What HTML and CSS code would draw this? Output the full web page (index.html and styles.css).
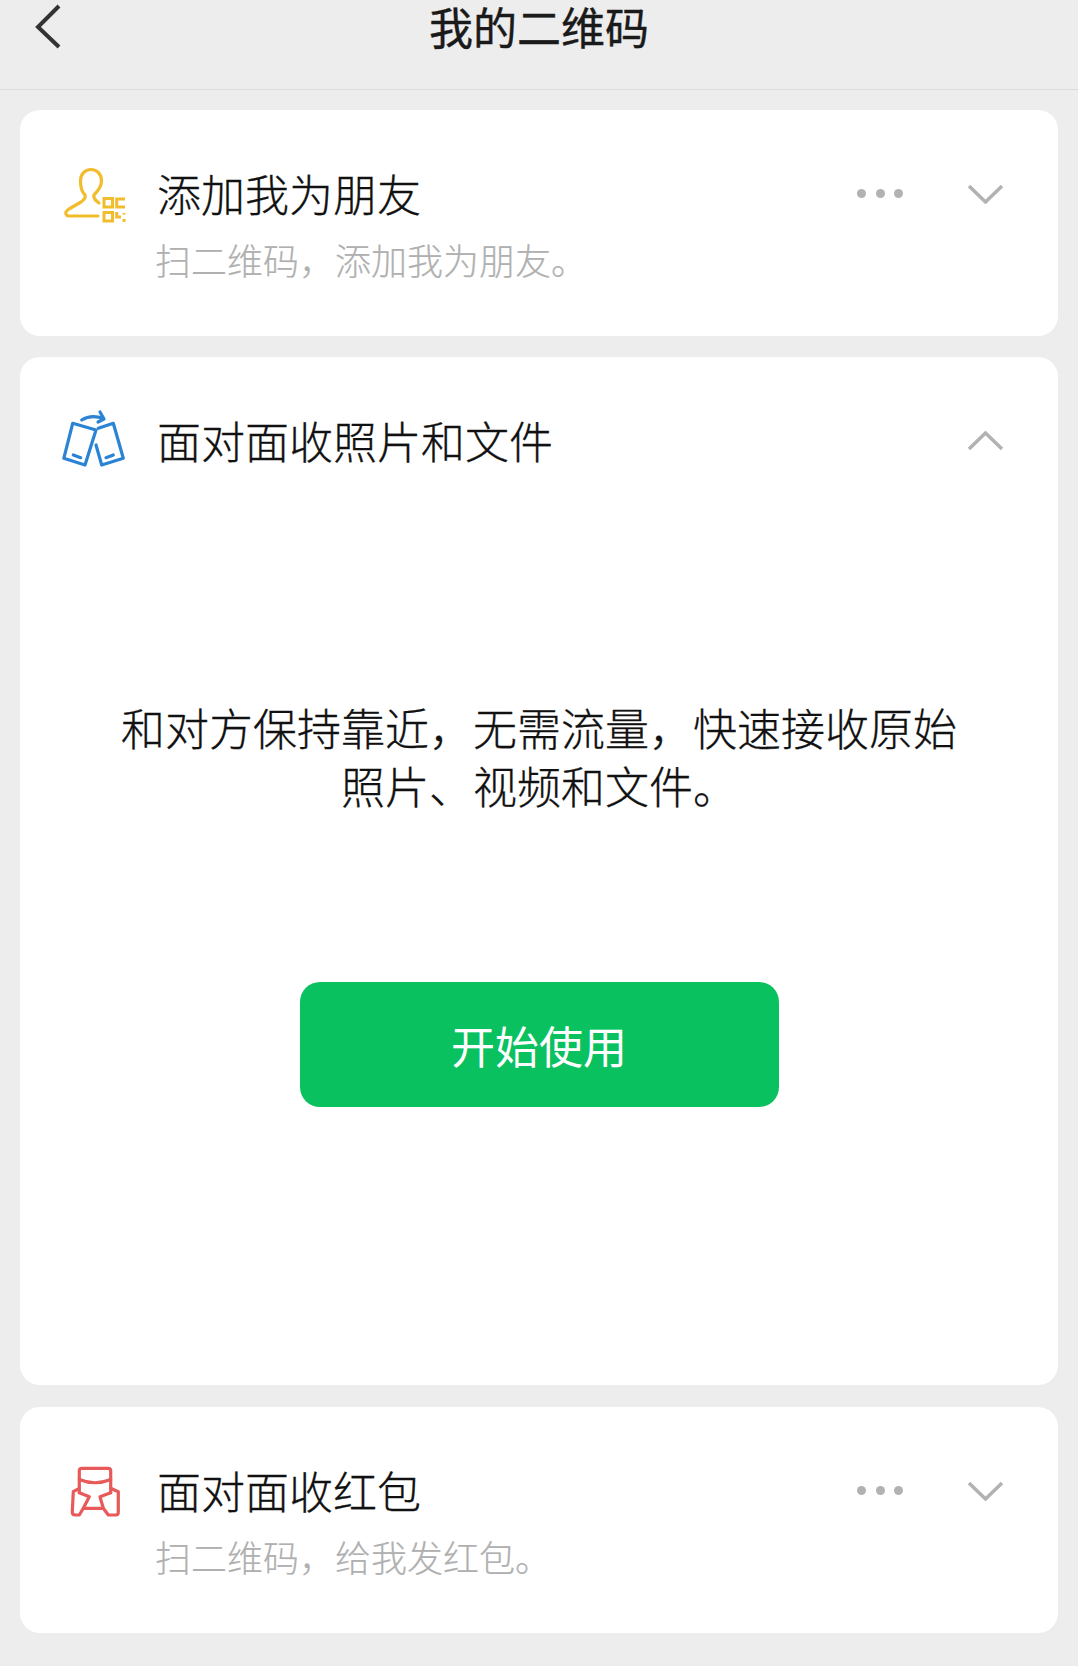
FILE: index.html
```html
<!DOCTYPE html>
<html lang="zh-CN">

<head>
    <meta charset="UTF-8">
    <title>我的二维码</title>
    <link rel="stylesheet" href="styles.css">
</head>

<body>

    <header class="top-bar">
        <svg class="back-icon" width="30" height="46" viewBox="0 0 30 46">
            <path d="M24 3 L3 24 L24 44" />
        </svg>
        <h1>我的二维码</h1>
    </header>

    <section class="card">
        <div class="row">
            <svg class="row-icon" width="64" height="58" viewBox="0 0 64 58">
                <g class="icon-yellow">
                    <path d="M36 36 C32 33 30 31 31 28 C35 24 38.5 19 38.5 14 C38.5 7 34 2.5 28 2.5 C22 2.5 17.5 7 17.5 14 C17.5 20 19 25 22 28 C23 31 21 33 18 35 L6 42 C3 44 2.5 46 3 47 C3.5 48.5 5 49 6 49 L35 49" />
                    <g class="qr">
                        <rect x="41" y="31.5" width="8.5" height="8.5" />
                        <rect x="41" y="45.5" width="8.5" height="8.5" />
                        <path d="M62 32 H53.7 V40 H62 M53.7 45 V50 H58 M61 46 V47.5 M61 52 V55" />
                    </g>
                </g>
            </svg>
            <div class="row-text">
                <div class="row-title">添加我为朋友</div>
                <div class="row-sub">扫二维码，添加我为朋友。</div>
            </div>
            <div class="dots"><span></span><span></span><span></span></div>
            <svg class="chevron" width="36" height="20" viewBox="0 0 36 20">
                <path d="M1 2 L17.5 18 L34 2" />
            </svg>
        </div>
    </section>

    <section class="card card-open">
        <div class="row">
            <svg class="row-icon" width="64" height="58" viewBox="0 0 64 58">
                <g class="icon-blue">
                    <path d="M9.7 9.3 L33 16 L22 51 L0.8 44.3 Z" />
                    <path d="M10.3 41 L17.7 43.7" />
                    <path d="M35.3 14.3 L50.3 9.3 L60.3 44.3 L38.7 51 L33 31" />
                    <path d="M43 43.7 L50.3 41" />
                    <path d="M18.7 6 C25 2 33 2 40.3 4.3 M37 -2 L41 5 L35 8" />
                </g>
            </svg>
            <div class="row-text">
                <div class="row-title">面对面收照片和文件</div>
            </div>
            <svg class="chevron" width="36" height="20" viewBox="0 0 36 20">
                <path d="M1 18 L17.5 2 L34 18" />
            </svg>
        </div>
        <p class="intro">和对方保持靠近，无需流量，快速接收原始<br>照片、视频和文件。</p>
        <button class="start-btn">开始使用</button>
    </section>

    <section class="card card-last">
        <div class="row">
            <svg class="row-icon" width="64" height="58" viewBox="0 0 64 58">
                <g class="icon-red">
                    <path d="M16.3 28.7 V6.5 C16.3 5 17.3 4.3 19 4.3 H45 C46.7 4.3 47.7 5 47.7 6.5 V28.7" />
                    <path d="M16.3 15.5 C26 19.5 38 19.5 47.7 15.5" />
                    <path d="M16.3 24.3 L10.3 27.7 L9.3 47.7 C9.3 50 10.3 51 12 51 H16.3 L20.3 44.3 H40.3 L45.3 51 H53 C54.7 51 55.3 50 55.3 47.7 V27.7 L47.7 24.3" />
                    <path d="M16.3 28.7 L26.3 32.7 L20.3 44.3" />
                    <path d="M47.7 28.7 L37 32.7 L40.3 44.3" />
                </g>
            </svg>
            <div class="row-text">
                <div class="row-title">面对面收红包</div>
                <div class="row-sub">扫二维码，给我发红包。</div>
            </div>
            <div class="dots"><span></span><span></span><span></span></div>
            <svg class="chevron" width="36" height="20" viewBox="0 0 36 20">
                <path d="M1 2 L17.5 18 L34 2" />
            </svg>
        </div>
    </section>

</body>

</html>
```

FILE: styles.css
```css
body {
    font-family: "Noto Sans CJK SC", "Noto Sans", sans-serif;
    margin: 0;
    padding: 0;
    height: 1666px;
    overflow: hidden;
    background-color: #ededed;
    color: #1a1a1a;
}

.top-bar {
    display: flex;
    justify-content: center;
    height: 89px;
    border-bottom: 1px solid #dcdcdc;
    position: relative;
}

.top-bar h1 {
    margin: 0;
    font-family: "Liberation Sans", "Noto Sans CJK SC", sans-serif;
    font-size: 44px;
    font-weight: 400;
    line-height: 60px;
    -webkit-text-stroke: 0.4px #1a1a1a;
}

.back-icon {
    position: absolute;
    left: 35px;
    top: 3px;
}

.back-icon path {
    fill: none;
    stroke: #333;
    stroke-width: 4;
}

.card {
    background-color: #fff;
    border-radius: 20px;
    margin: 20px 20px 0;
    height: 226px;
}

.card-open {
    height: 1028px;
    margin-top: 21px;
    display: flex;
    flex-direction: column;
    align-items: center;
}

.card-last {
    margin-top: 22px;
}

.row {
    display: flex;
    align-self: stretch;
    align-items: flex-start;
    padding: 50px 54px 0 43px;
}

.row-icon {
    flex: none;
    margin-right: 30px;
    margin-top: 7px;
    overflow: visible;
}

.row-icon g {
    fill: none;
    stroke-width: 3.2;
    stroke-linejoin: round;
    stroke-linecap: round;
}

.row-icon .qr {
    stroke-width: 3;
    stroke-linejoin: miter;
    stroke-linecap: butt;
}

.icon-yellow {
    stroke: #f2bd2c;
}

.icon-blue {
    stroke: #2b83d3;
}

.icon-red {
    stroke: #e85a5a;
}

.row-text {
    flex: 1;
}

.row-title {
    font-size: 44px;
    line-height: 58px;
    margin-top: 4px;
    font-weight: 300;
    color: #111;
    -webkit-text-stroke: 0.3px #111;
}

.row-sub {
    font-size: 36px;
    line-height: 48px;
    margin-top: 13px;
    margin-left: -2px;
    color: #b0b0b0;
    font-weight: 300;
    -webkit-text-stroke: 0.2px #b0b0b0;
}

.dots {
    display: flex;
    gap: 9.5px;
    margin-top: 29px;
    margin-right: 65px;
}

.dots span {
    width: 9px;
    height: 9px;
    border-radius: 50%;
    background-color: #b2b2b2;
}

.chevron {
    flex: none;
    margin-top: 24px;
}

.chevron path {
    fill: none;
    stroke: #b2b2b2;
    stroke-width: 3.5;
}

.intro {
    margin: 226px 0 0;
    font-size: 44px;
    line-height: 58px;
    text-align: center;
    font-weight: 300;
    color: #111;
    -webkit-text-stroke: 0.3px #111;
}

.start-btn {
    margin-top: 168px;
    width: 479px;
    height: 125px;
    border: none;
    border-radius: 20px;
    background-color: #0ac160;
    color: #fff;
    font-family: inherit;
    font-size: 44px;
}
```
